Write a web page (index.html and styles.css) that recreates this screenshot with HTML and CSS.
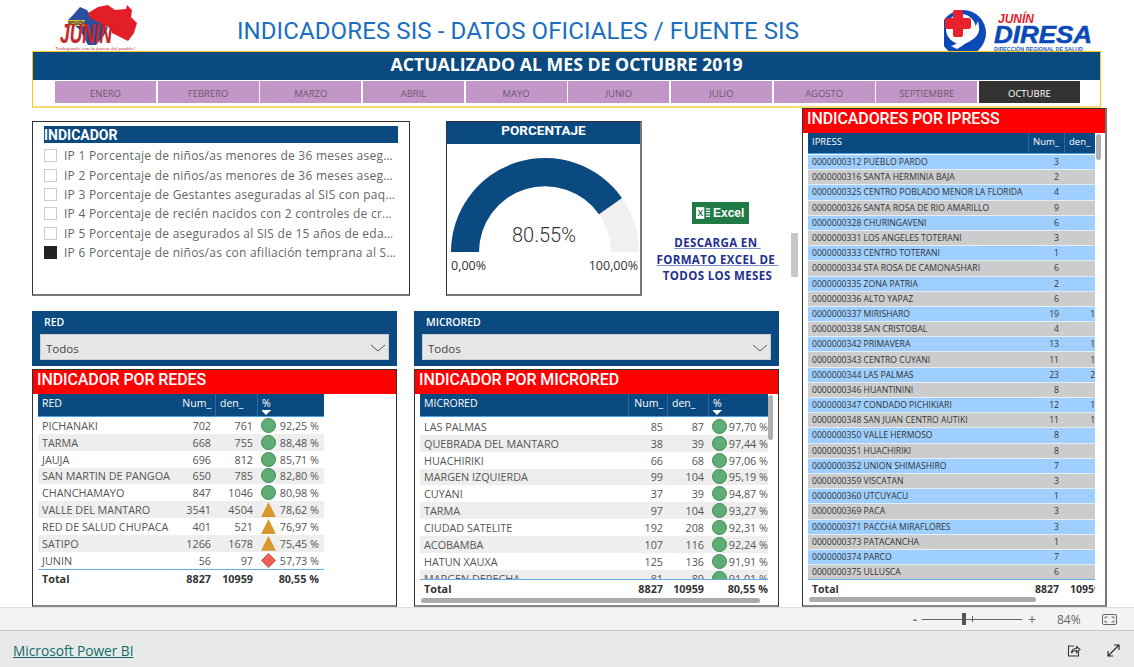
FILE: index.html
```html
<!DOCTYPE html>
<html lang="es">
<head>
<meta charset="utf-8">
<title>Indicadores SIS</title>
<link rel="stylesheet" href="styles.css">
</head>
<body>
<div class="page">
  <div class="report">
    <header class="top">
      <svg class="logo-left" viewBox="0 0 90 48" width="90" height="48">
        <polygon fill="#2a4f9f" points="18,17 23,12 30,4 37,7 40,12 52,20 58,25 53,34 46,42 38,42 30,27"/>
        <polygon fill="#e31e26" points="38,10 48,4 58,2 65,7 76,6 77,2 82,7 81,14 87,20 84,30 78,38 70,34 62,30 60,25 50,20 40,15"/>
        <rect x="18" y="17" width="17" height="6" fill="#e8c430"/>
        <text class="lg-region" x="26.500" y="22" text-anchor="middle">REGIÓN</text>
        <text class="lg-junin" x="10" y="40" textLength="52" lengthAdjust="spacingAndGlyphs">JUNIN</text>
        <text class="lg-tag" x="5" y="47" textLength="80" lengthAdjust="spacingAndGlyphs">Trabajando con la fuerza del pueblo!</text>
      </svg>
      <h1 class="title">INDICADORES SIS - DATOS OFICIALES / FUENTE SIS</h1>
      <svg class="logo-right" viewBox="0 0 160 51" width="160" height="51">
        <circle cx="19" cy="33" r="23" fill="#0b49b8"/>
        <circle cx="17" cy="29" r="15" fill="#fff"/>
        <path fill="#fff" d="M7 46c5-1 8-5 12-7 5-2 9-4 11-9l4-9 1 6c1 6-3 11-9 14-6 3-9 6-13 8z"/>
        <path fill="#e9212b" d="M9 6a2 2 0 0 1 2-2h6a2 2 0 0 1 2 2v6h6a2 2 0 0 1 2 2v7a2 2 0 0 1-2 2h-6v6a2 2 0 0 1-2 2h-6a2 2 0 0 1-2-2v-6H3a2 2 0 0 1-2-2v-7a2 2 0 0 1 2-2h6z" transform="translate(0 6)"/>
        <text class="lg-jun" x="54" y="23">JUNÍN</text>
        <text class="lg-dir" x="50" y="43" textLength="98" lengthAdjust="spacingAndGlyphs">DIRESA</text>
        <text class="lg-sub" x="50" y="51" textLength="89" lengthAdjust="spacingAndGlyphs">DIRECCIÓN REGIONAL DE SALUD</text>
      </svg>
    </header>

    <section class="banner">
      <div class="banner-title">ACTUALIZADO AL MES DE OCTUBRE 2019</div>
      <nav class="months">
        <span class="month">ENERO</span>
        <span class="month">FEBRERO</span>
        <span class="month">MARZO</span>
        <span class="month">ABRIL</span>
        <span class="month">MAYO</span>
        <span class="month">JUNIO</span>
        <span class="month">JULIO</span>
        <span class="month">AGOSTO</span>
        <span class="month">SEPTIEMBRE</span>
        <span class="month month-on">OCTUBRE</span>
      </nav>
    </section>

    <main class="main">
      <div class="left">
        <div class="row-top">
          <section class="ind-card">
            <div class="ind-head">INDICADOR</div>
            <ul class="ind-list">
              <li class="ind-item"><i class="chk"></i><span class="ind-txt">IP 1 Porcentaje de niños/as menores de 36 meses asegurados al SIS con paquete completo</span></li>
              <li class="ind-item"><i class="chk"></i><span class="ind-txt">IP 2 Porcentaje de niños/as menores de 36 meses asegurados al SIS con suplemento</span></li>
              <li class="ind-item"><i class="chk"></i><span class="ind-txt">IP 3 Porcentaje de Gestantes aseguradas al SIS con paquete preventivo completo</span></li>
              <li class="ind-item"><i class="chk"></i><span class="ind-txt">IP 4 Porcentaje de recién nacidos con 2 controles de crecimiento y desarrollo</span></li>
              <li class="ind-item"><i class="chk"></i><span class="ind-txt">IP 5 Porcentaje de asegurados al SIS de 15 años de edad a más con tamizaje</span></li>
              <li class="ind-item"><i class="chk chk-on"></i><span class="ind-txt">IP 6 Porcentaje de niños/as con afiliación temprana al SIS antes de los 30 días</span></li>
            </ul>
          </section>

          <section class="gauge-card">
            <div class="gauge-head">PORCENTAJE</div>
            <svg class="gauge" viewBox="0 0 194 150" width="194" height="150">
              <path fill="#f1f0ef" d="M4 108a94 94 0 0 1 188 0h-28a66 66 0 0 0-132 0z"/>
              <path fill="#0b4a80" d="M4 108a94 94 0 0 1 171 -53.900l-23 16.100a66 66 0 0 0-120 37.800z"/>
              <text class="g-val" x="97" y="98" text-anchor="middle">80.55%</text>
              <text class="g-lim" x="4" y="126">0,00%</text>
              <text class="g-lim" x="191" y="126" text-anchor="end">100,00%</text>
            </svg>
          </section>

          <section class="xl">
            <div class="xl-badge">
              <svg class="xl-ico" viewBox="0 0 18 14" width="15" height="12">
                <rect x="0" y="0" width="10" height="14" fill="#fff"/>
                <text class="xl-x" x="5" y="11" text-anchor="middle">X</text>
                <path d="M12 2h5M12 5h5M12 8h5M12 11h5" stroke="#fff" stroke-width="1.400"/>
              </svg>
              <span class="xl-word">Excel</span>
            </div>
            <p class="xl-text"><u>DESCARGA EN&nbsp;</u><br><u>FORMATO EXCEL DE&nbsp;</u><br>TODOS LOS MESES</p>
          </section>
        </div>

        <div class="row-bottom">
          <div class="col">
            <section class="slicer">
              <div class="slicer-label">RED</div>
              <div class="dropdown"><span>Todos</span>
                <svg viewBox="0 0 16 8" width="16" height="8"><path d="M1 1l7 6 7-6" fill="none" stroke="#555"/></svg>
              </div>
            </section>
            <section class="panel">
              <h2 class="red-head">INDICADOR POR REDES</h2>
              <div class="tbl tbl-red">
                <div class="tr th"><span>RED</span><span class="n">Num_</span><span>den_</span><span class="pct-h"><u>%</u><i class="sort"></i></span></div>
                <div class="tbody">
                  <div class="tr"><span>PICHANAKI</span><span class="n">702</span><span class="n">761</span><span class="pct"><i class="kpi g"></i>92,25 %</span></div>
                  <div class="tr alt"><span>TARMA</span><span class="n">668</span><span class="n">755</span><span class="pct"><i class="kpi g"></i>88,48 %</span></div>
                  <div class="tr"><span>JAUJA</span><span class="n">696</span><span class="n">812</span><span class="pct"><i class="kpi g"></i>85,71 %</span></div>
                  <div class="tr alt"><span>SAN MARTIN DE PANGOA</span><span class="n">650</span><span class="n">785</span><span class="pct"><i class="kpi g"></i>82,80 %</span></div>
                  <div class="tr"><span>CHANCHAMAYO</span><span class="n">847</span><span class="n">1046</span><span class="pct"><i class="kpi g"></i>80,98 %</span></div>
                  <div class="tr alt"><span>VALLE DEL MANTARO</span><span class="n">3541</span><span class="n">4504</span><span class="pct"><i class="kpi t"></i>78,62 %</span></div>
                  <div class="tr"><span>RED DE SALUD CHUPACA</span><span class="n">401</span><span class="n">521</span><span class="pct"><i class="kpi t"></i>76,97 %</span></div>
                  <div class="tr alt"><span>SATIPO</span><span class="n">1266</span><span class="n">1678</span><span class="pct"><i class="kpi t"></i>75,45 %</span></div>
                  <div class="tr"><span>JUNIN</span><span class="n">56</span><span class="n">97</span><span class="pct"><i class="kpi d"></i>57,73 %</span></div>
                </div>
                <div class="tr total"><span>Total</span><span class="n">8827</span><span class="n">10959</span><span class="n">80,55 %</span></div>
              </div>
            </section>
          </div>

          <div class="col">
            <section class="slicer">
              <div class="slicer-label">MICRORED</div>
              <div class="dropdown"><span>Todos</span>
                <svg viewBox="0 0 16 8" width="16" height="8"><path d="M1 1l7 6 7-6" fill="none" stroke="#555"/></svg>
              </div>
            </section>
            <section class="panel">
              <h2 class="red-head">INDICADOR POR MICRORED</h2>
              <div class="tbl tbl-micro">
                <div class="tr th"><span>MICRORED</span><span class="n">Num_</span><span>den_</span><span class="pct-h"><u>%</u><i class="sort"></i></span></div>
                <div class="tbody">
                  <div class="tr"><span>LAS PALMAS</span><span class="n">85</span><span class="n">87</span><span class="pct"><i class="kpi g"></i>97,70 %</span></div>
                  <div class="tr alt"><span>QUEBRADA DEL MANTARO</span><span class="n">38</span><span class="n">39</span><span class="pct"><i class="kpi g"></i>97,44 %</span></div>
                  <div class="tr"><span>HUACHIRIKI</span><span class="n">66</span><span class="n">68</span><span class="pct"><i class="kpi g"></i>97,06 %</span></div>
                  <div class="tr alt"><span>MARGEN IZQUIERDA</span><span class="n">99</span><span class="n">104</span><span class="pct"><i class="kpi g"></i>95,19 %</span></div>
                  <div class="tr"><span>CUYANI</span><span class="n">37</span><span class="n">39</span><span class="pct"><i class="kpi g"></i>94,87 %</span></div>
                  <div class="tr alt"><span>TARMA</span><span class="n">97</span><span class="n">104</span><span class="pct"><i class="kpi g"></i>93,27 %</span></div>
                  <div class="tr"><span>CIUDAD SATELITE</span><span class="n">192</span><span class="n">208</span><span class="pct"><i class="kpi g"></i>92,31 %</span></div>
                  <div class="tr alt"><span>ACOBAMBA</span><span class="n">107</span><span class="n">116</span><span class="pct"><i class="kpi g"></i>92,24 %</span></div>
                  <div class="tr"><span>HATUN XAUXA</span><span class="n">125</span><span class="n">136</span><span class="pct"><i class="kpi g"></i>91,91 %</span></div>
                  <div class="tr alt"><span>MARGEN DERECHA</span><span class="n">81</span><span class="n">89</span><span class="pct"><i class="kpi g"></i>91,01 %</span></div>
                </div>
                <div class="tr total"><span>Total</span><span class="n">8827</span><span class="n">10959</span><span class="n">80,55 %</span></div>
                <i class="vbar"></i>
                <i class="hbar"></i>
              </div>
            </section>
          </div>
        </div>
        <i class="page-scroll"></i>
      </div>

      <section class="panel panel-ipress">
        <h2 class="red-head">INDICADORES POR IPRESS</h2>
        <div class="tbl tbl-ipress">
          <div class="tr th"><span>IPRESS</span><span class="n">Num_</span><span>den_</span></div>
          <div class="tbody">
            <div class="tr"><span>0000000312 PUEBLO PARDO</span><span class="n">3</span><span class="n">3</span></div>
            <div class="tr alt"><span>0000000316 SANTA HERMINIA BAJA</span><span class="n">2</span><span class="n">2</span></div>
            <div class="tr"><span>0000000325 CENTRO POBLADO MENOR LA FLORIDA</span><span class="n">4</span><span class="n">4</span></div>
            <div class="tr alt"><span>0000000326 SANTA ROSA DE RIO AMARILLO</span><span class="n">9</span><span class="n">9</span></div>
            <div class="tr"><span>0000000328 CHURINGAVENI</span><span class="n">6</span><span class="n">6</span></div>
            <div class="tr alt"><span>0000000331 LOS ANGELES TOTERANI</span><span class="n">3</span><span class="n">3</span></div>
            <div class="tr"><span>0000000333 CENTRO TOTERANI</span><span class="n">1</span><span class="n">1</span></div>
            <div class="tr alt"><span>0000000334 STA ROSA DE CAMONASHARI</span><span class="n">6</span><span class="n">6</span></div>
            <div class="tr"><span>0000000335 ZONA PATRIA</span><span class="n">2</span><span class="n">2</span></div>
            <div class="tr alt"><span>0000000336 ALTO YAPAZ</span><span class="n">6</span><span class="n">6</span></div>
            <div class="tr"><span>0000000337 MIRISHARO</span><span class="n">19</span><span class="n">19</span></div>
            <div class="tr alt"><span>0000000338 SAN CRISTOBAL</span><span class="n">4</span><span class="n">4</span></div>
            <div class="tr"><span>0000000342 PRIMAVERA</span><span class="n">13</span><span class="n">13</span></div>
            <div class="tr alt"><span>0000000343 CENTRO CUYANI</span><span class="n">11</span><span class="n">11</span></div>
            <div class="tr"><span>0000000344 LAS PALMAS</span><span class="n">23</span><span class="n">23</span></div>
            <div class="tr alt"><span>0000000346 HUANTININI</span><span class="n">8</span><span class="n">8</span></div>
            <div class="tr"><span>0000000347 CONDADO PICHIKIARI</span><span class="n">12</span><span class="n">12</span></div>
            <div class="tr alt"><span>0000000348 SAN JUAN CENTRO AUTIKI</span><span class="n">11</span><span class="n">11</span></div>
            <div class="tr"><span>0000000350 VALLE HERMOSO</span><span class="n">8</span><span class="n">8</span></div>
            <div class="tr alt"><span>0000000351 HUACHIRIKI</span><span class="n">8</span><span class="n">8</span></div>
            <div class="tr"><span>0000000352 UNION SHIMASHIRO</span><span class="n">7</span><span class="n">7</span></div>
            <div class="tr alt"><span>0000000359 VISCATAN</span><span class="n">3</span><span class="n">3</span></div>
            <div class="tr"><span>0000000360 UTCUYACU</span><span class="n">1</span><span class="n">1</span></div>
            <div class="tr alt"><span>0000000369 PACA</span><span class="n">3</span><span class="n">3</span></div>
            <div class="tr"><span>0000000371 PACCHA MIRAFLORES</span><span class="n">3</span><span class="n">3</span></div>
            <div class="tr alt"><span>0000000373 PATACANCHA</span><span class="n">1</span><span class="n">1</span></div>
            <div class="tr"><span>0000000374 PARCO</span><span class="n">7</span><span class="n">7</span></div>
            <div class="tr alt"><span>0000000375 ULLUSCA</span><span class="n">6</span><span class="n">6</span></div>
          </div>
          <div class="tr total"><span>Total</span><span class="n">8827</span><span class="n">10959</span></div>
          <i class="vbar"></i>
          <i class="hbar"></i>
        </div>
      </section>
    </main>
  </div>

  <div class="zoombar">
    <span class="z-minus">-</span>
    <span class="z-track"><i class="z-thumb"></i><i class="z-tick"></i></span>
    <span class="z-plus">+</span>
    <span class="z-val">84%</span>
    <svg class="z-fit" viewBox="0 0 15 11" width="15" height="11">
      <rect x="0.500" y="0.500" width="14" height="10" rx="1.500" fill="none" stroke="#666"/>
      <path d="M3 4.500V3h2.500M12 4.500V3H9.500M3 6.500V8h2.500M12 6.500V8H9.500" fill="none" stroke="#666"/>
    </svg>
  </div>

  <footer class="footer">
    <a class="pbi" href="#">Microsoft Power BI</a>
    <div class="foot-icons">
      <svg viewBox="0 0 14 13" width="14" height="13"><path d="M7 2H1.500v10h10V8" fill="none" stroke="#333" stroke-width="1.100"/><path d="M4.500 9c0-3 2-4.500 5-4.500V2.500L13 5.500 9.500 8.500V6.500C7.500 6.500 5.500 7 4.500 9z" fill="none" stroke="#333" stroke-width="1.100"/></svg>
      <svg viewBox="0 0 13 13" width="13" height="13"><path d="M1 12L12 1M7 1h5v5M1 7v5h5" fill="none" stroke="#222" stroke-width="1.100"/></svg>
    </div>
  </footer>
</div>
</body>
</html>
```
FILE: styles.css
```css
* { box-sizing: border-box; }
html, body { margin: 0; padding: 0; background: #fff; }
body { font-family: "Open Sans", "Noto Sans", sans-serif; color: #444; }
.page { width: 1134px; height: 667px; display: flex; flex-direction: column; overflow: hidden; }
.report { height: 607px; flex: none; }

/* header */
.top { height: 51px; display: flex; align-items: flex-start; padding-left: 50px; }
.logo-left { margin-top: 3px; flex: none; }
.logo-right { flex: none; margin-right: 30px; }
.title { flex: 1; margin: 0; padding: 15px 48px 0 0; text-align: center; font: 400 24px/32px Roboto, sans-serif; color: #1a6fc0; letter-spacing: .11px; white-space: nowrap; }
.lg-region { font: 700 4.800px Roboto, sans-serif; fill: #24314f; }
.lg-junin { font: italic 700 28px "Liberation Sans", sans-serif; fill: #c8282a; stroke: #8d2020; stroke-width: .2px; }
.lg-tag { font: italic 5px "Liberation Serif", serif; fill: #c0272d; }
.lg-jun { font: italic 700 12px "Liberation Sans", sans-serif; fill: #e9212b; }
.lg-dir { font: italic 700 23px "Liberation Sans", sans-serif; fill: #0b49b8; stroke: #0b49b8; stroke-width: .5px; }
.lg-sub { font: 700 6px "Liberation Sans", sans-serif; fill: #2a5fb8; }

/* banner */
.banner { margin-left: 32px; width: 1069px; height: 57px; border: 1px solid #f2c811; border-bottom: 2px solid #f5dc70; background: #fff; }
.banner-title { height: 28px; background: #0b4a80; color: #fff; text-align: center; font: 700 17.700px/25px "Open Sans", sans-serif; }
.months { display: flex; gap: 1.660px; padding: 1px 0 0 22px; }
.month { width: 101px; height: 22px; background: #c297c7; color: #6a5a6d; font-size: 9.500px; line-height: 25px; text-align: center; }
.month-on { background: #333; color: #fff; }

/* main */
.main { display: flex; padding-left: 32px; height: 499px; }
.left { width: 747px; padding-top: 13px; flex: none; position: relative; }
.row-top { display: flex; height: 175px; }
.ind-card { width: 378px; border: 1px solid #333; border-bottom: 2px solid #777; padding: 4px 11px; }
.ind-head { height: 17px; background: #0b4a80; color: #fff; font: 700 14px/18px Roboto, sans-serif; }
.ind-list { list-style: none; margin: 3px 0 0; padding: 0; }
.ind-item { display: flex; align-items: center; height: 19.400px; }
.chk { width: 13px; height: 13px; border: 1px solid #ccc; flex: none; margin-right: 7px; }
.chk-on { background: #222; border-color: #222; }
.ind-txt { font-size: 12px; color: #666; letter-spacing: .25px; white-space: nowrap; overflow: hidden; text-overflow: ellipsis; width: 334px; }

.gauge-card { width: 196px; margin-left: 36px; border: 1px solid #333; border-bottom: 2px solid #777; border-right: 2px solid #777; }
.gauge-head { height: 22px; background: #0b4a80; color: #fff; text-align: center; font: 700 13.500px/17px Roboto, sans-serif; }
.gauge { display: block; }
.g-val { font: 300 20px Roboto, sans-serif; fill: #333; }
.g-lim { font: 400 12.500px "Open Sans", sans-serif; fill: #333; }

.xl { width: 150px; margin-left: 14px; padding-top: 81px; display: flex; flex-direction: column; align-items: center; }
.xl-badge { width: 57px; height: 22px; margin-left: 6px; background: #217a46; display: flex; align-items: center; gap: 2px; padding-left: 4px; color: #fff; }
.xl-ico { flex: none; }
.xl-x { font: 700 10px "Liberation Sans", sans-serif; fill: #217a46; }
.xl-word { font: 700 12px/22px "Liberation Sans", sans-serif; }
.xl-text { margin: 11px 0 0; text-align: center; color: #232f8f; font: 700 11.500px/16.500px "Open Sans", sans-serif; letter-spacing: .35px; white-space: nowrap; }
.xl-text u { text-decoration-color: #7f8fd0; }

.page-scroll { position: absolute; left: 759px; top: 125px; width: 7px; height: 44px; background: #c8c8c8; }

.row-bottom { display: grid; grid-template-columns: 365px 365px; column-gap: 17px; margin-top: 15px; }
.col { display: flex; flex-direction: column; gap: 3px; }
.slicer { height: 55px; background: #0b4a80; padding: 0 8px; }
.slicer-label { height: 23px; padding-left: 4px; color: #fff; font-size: 10.500px; font-weight: 600; line-height: 23px; }
.dropdown { height: 26px; background: #e6e6e6; border: 1px solid #ccc; display: flex; align-items: center; justify-content: space-between; padding: 2px 2px 0 5px; font-size: 11.500px; color: #444; }

.panel { border: 1px solid #333; border-bottom: 2px solid #888; height: 238px; position: relative; }
.red-head { margin: 0; height: 24px; background: #ff0000; color: #fff; padding-left: 4px; font: 500 16px/19px Roboto, sans-serif; letter-spacing: -.1px; }
.panel-ipress { width: 305px; height: 499px; margin-left: 23px; border-right: 2px solid #777; flex: none; }

/* tables */
.tbl { position: relative; font-size: 10.800px; color: #555; }
.tr { display: grid; align-items: center; height: 16.850px; white-space: nowrap; overflow: hidden; }
.tr > span { padding: 0 4px; overflow: hidden; }
.tr .n { text-align: right; }
.alt { background: #eee; }
.th { height: 23px; background: #0b4a80; color: #fff; font-size: 10.500px; align-items: start; line-height: 18px; border-bottom: 1px solid #4a9fe8; }
.th > span:nth-child(n+3) { border-left: 1px solid #2a6aa0; height: 23px; }
.pct { display: flex; align-items: center; justify-content: space-between; }
.pct-h { position: relative; }
.pct-h u { text-decoration: none; border-bottom: 1px solid #fff; line-height: 14px; display: inline-block; }
.sort { position: absolute; left: 4px; top: 17px; border: 4px solid transparent; border-top: 4px solid #fff; border-bottom: 0; }
.kpi { display: block; width: 15px; height: 15px; flex: none; }
.kpi.g { border-radius: 50%; background: #5fad74; border: 1px solid #3e8a57; }
.kpi.t { background: #d8982e; clip-path: polygon(50% 0, 100% 100%, 0 100%); }
.kpi.d { width: 13px; height: 13px; margin-left: 1px; background: #ee6055; border: 1px solid #c9473e; transform: rotate(45deg) scale(.8); }
.tr.total { font-weight: 700; color: #333; border-top: 1px solid #63ade8; height: 18px; }

.tbl-red { margin-left: 5px; width: 286px; }
.tbl-red .tr { grid-template-columns: 137px 40px 42px 67px; }
.tbl-red .tr > span:last-child { padding-right: 5px; }

.tbl-micro { margin-left: 5px; width: 348px; }
.tbl-micro .tr { grid-template-columns: 208px 39px 41px 60px; }
.tbl-micro .th > span:nth-child(2) { border-left: 1px solid #2a6aa0; height: 23px; }
.tbl-micro .tr > span:last-child { padding-right: 0; }
.tbl-micro .tbody { height: 162px; overflow: hidden; padding-top: 1px; }

.tbl-ipress { margin-left: 5px; width: 287px; height: 470px; font-size: 8.650px; color: #333; }
.tbl-ipress .tr { grid-template-columns: 220px 36px 41px; height: 15.200px; width: 297px; overflow: visible; }
.tbl-ipress .tr.th { height: 21px; width: 287px; font-size: 9.500px; overflow: hidden; }
.tbl-ipress .th > span:nth-child(n+3) { height: 21px; }
.tbl-ipress .th > span:nth-child(2) { border-left: 1px solid #2a6aa0; height: 21px; }
.tbl-ipress .tbody { height: 425px; width: 287px; overflow: hidden; padding-top: 1px; }
.tbl-ipress .tbody .tr { background: #9ecfff; border-bottom: 1px solid #e4eef8; }
.tbl-ipress .tbody .tr.alt { background: #ccc; }
.tbl-ipress .tr .n { padding-right: 5px; }
.tbl-ipress .tr.total { height: 19px; width: 287px; font-size: 10.500px; overflow: hidden; grid-template-columns: 220px 36px 41px; }

.vbar { position: absolute; background: #b0b0b0; border-radius: 3px; }
.hbar { position: absolute; background: #ababab; border-radius: 3px; }
.tbl-micro .vbar { left: 348px; top: 1px; width: 5px; height: 45px; }
.tbl-micro .hbar { left: 1px; top: 204px; width: 339px; height: 5px; }
.tbl-ipress .vbar { left: 288px; top: 1px; width: 5px; height: 26px; }
.tbl-ipress .hbar { left: 1px; top: 464px; width: 227px; height: 5px; }

/* bottom bars */
.zoombar { height: 24px; flex: none; background: #f3f3f3; border-top: 1px solid #ddd; border-bottom: 1px solid #c8c8c8; display: flex; align-items: center; padding-left: 913px; font-size: 12px; color: #666; }
.z-minus { width: 9px; font-weight: 700; }
.z-track { position: relative; width: 100px; height: 1px; background: #666; }
.z-thumb { position: absolute; left: 40px; top: -6px; width: 4px; height: 12px; background: #555; }
.z-tick { position: absolute; left: 50px; top: -3px; width: 1px; height: 6px; background: #666; }
.z-plus { margin-left: 6px; width: 12px; font-size: 14px; }
.z-val { margin-left: 17px; width: 28px; }
.z-fit { margin-left: 17px; }
.footer { flex: 1; background: #e9e9e9; display: flex; align-items: center; justify-content: space-between; padding: 2px 14px 0 13px; }
.pbi { color: #0d6b6b; font-size: 13.700px; text-decoration: underline; }
.foot-icons { display: flex; gap: 26px; align-items: center; }
```
